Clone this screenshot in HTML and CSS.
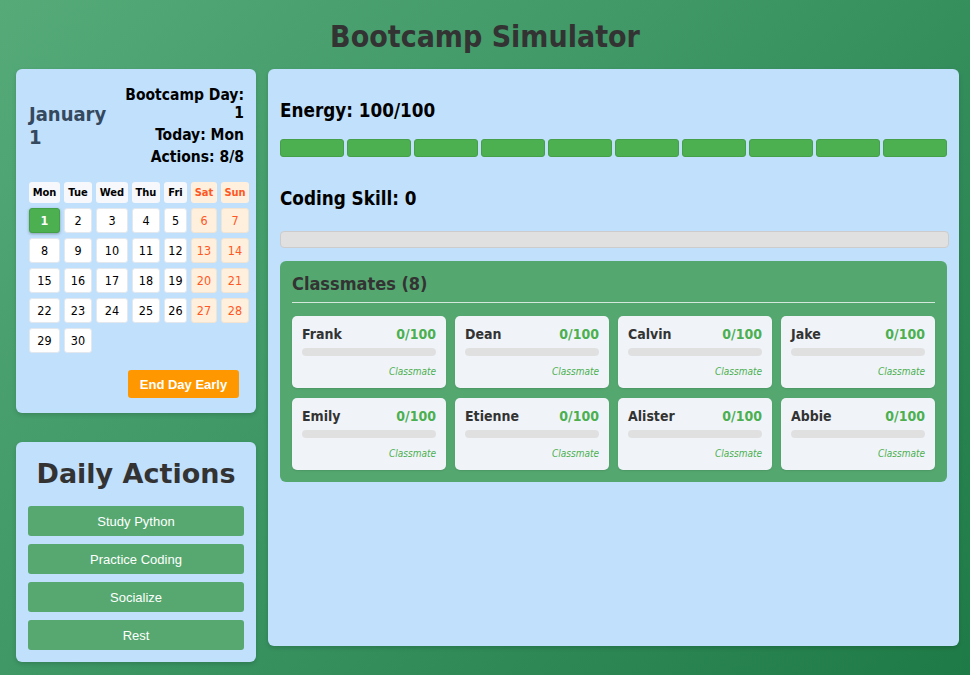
FILE: index.html
```html
<!DOCTYPE html>
<html lang="en">
<head>
<meta charset="utf-8">
<title>Bootcamp Simulator</title>
<link rel="stylesheet" href="styles.css">
</head>
<body>
<h1 class="title">Bootcamp Simulator</h1>
<div class="layout">
  <aside class="sidebar">
    <section class="panel calendar-panel">
      <div class="cal-header">
        <div class="cal-month">January 1</div>
        <div class="cal-info">
          <p>Bootcamp Day: 1</p>
          <p>Today: Mon</p>
          <p>Actions: 8/8</p>
        </div>
      </div>
      <div class="cal-grid">
        <div class="cal-head">Mon</div>
        <div class="cal-head">Tue</div>
        <div class="cal-head">Wed</div>
        <div class="cal-head">Thu</div>
        <div class="cal-head">Fri</div>
        <div class="cal-head weekend">Sat</div>
        <div class="cal-head weekend">Sun</div>
        <div class="cal-day today">1</div>
        <div class="cal-day">2</div>
        <div class="cal-day">3</div>
        <div class="cal-day">4</div>
        <div class="cal-day">5</div>
        <div class="cal-day weekend">6</div>
        <div class="cal-day weekend">7</div>
        <div class="cal-day">8</div>
        <div class="cal-day">9</div>
        <div class="cal-day">10</div>
        <div class="cal-day">11</div>
        <div class="cal-day">12</div>
        <div class="cal-day weekend">13</div>
        <div class="cal-day weekend">14</div>
        <div class="cal-day">15</div>
        <div class="cal-day">16</div>
        <div class="cal-day">17</div>
        <div class="cal-day">18</div>
        <div class="cal-day">19</div>
        <div class="cal-day weekend">20</div>
        <div class="cal-day weekend">21</div>
        <div class="cal-day">22</div>
        <div class="cal-day">23</div>
        <div class="cal-day">24</div>
        <div class="cal-day">25</div>
        <div class="cal-day">26</div>
        <div class="cal-day weekend">27</div>
        <div class="cal-day weekend">28</div>
        <div class="cal-day">29</div>
        <div class="cal-day">30</div>
      </div>
      <button class="end-day">End Day Early</button>
    </section>
    <section class="panel actions-panel">
      <h2 class="actions-title">Daily Actions</h2>
      <button class="action-btn">Study Python</button>
      <button class="action-btn">Practice Coding</button>
      <button class="action-btn">Socialize</button>
      <button class="action-btn">Rest</button>
    </section>
  </aside>
  <main class="panel main-panel">
    <h3 class="stat-title energy-title">Energy: 100/100</h3>
    <div class="energy-bar">
      <div class="seg"></div><div class="seg"></div><div class="seg"></div><div class="seg"></div><div class="seg"></div>
      <div class="seg"></div><div class="seg"></div><div class="seg"></div><div class="seg"></div><div class="seg"></div>
    </div>
    <h3 class="stat-title skill-title">Coding Skill: 0</h3>
    <div class="skill-bar"></div>
    <section class="classmates">
      <h3 class="classmates-title">Classmates (8)</h3>
      <div class="cards">
        <div class="card"><div class="card-top"><span class="name">Frank</span><span class="score">0/100</span></div><div class="card-bar"></div><div class="role">Classmate</div></div>
        <div class="card"><div class="card-top"><span class="name">Dean</span><span class="score">0/100</span></div><div class="card-bar"></div><div class="role">Classmate</div></div>
        <div class="card"><div class="card-top"><span class="name">Calvin</span><span class="score">0/100</span></div><div class="card-bar"></div><div class="role">Classmate</div></div>
        <div class="card"><div class="card-top"><span class="name">Jake</span><span class="score">0/100</span></div><div class="card-bar"></div><div class="role">Classmate</div></div>
        <div class="card"><div class="card-top"><span class="name">Emily</span><span class="score">0/100</span></div><div class="card-bar"></div><div class="role">Classmate</div></div>
        <div class="card"><div class="card-top"><span class="name">Etienne</span><span class="score">0/100</span></div><div class="card-bar"></div><div class="role">Classmate</div></div>
        <div class="card"><div class="card-top"><span class="name">Alister</span><span class="score">0/100</span></div><div class="card-bar"></div><div class="role">Classmate</div></div>
        <div class="card"><div class="card-top"><span class="name">Abbie</span><span class="score">0/100</span></div><div class="card-bar"></div><div class="role">Classmate</div></div>
      </div>
    </section>
  </main>
</div>
</body>
</html>
```

FILE: styles.css
```css
* { box-sizing: border-box; }

html, body { height: 100%; }

body {
  margin: 0;
  font-family: "DejaVu Sans Condensed", "DejaVu Sans", sans-serif;
  font-stretch: condensed;
  color: #000;
  background: linear-gradient(135deg, #55aa78 0%, #3a9462 50%, #1e7a46 100%);
  overflow: hidden;
}

.title {
  margin: 0;
  padding-top: 18px;
  height: 69px;
  font-size: 30px;
  line-height: 37px;
  text-align: center;
  color: #333;
  font-weight: bold;
}

.layout {
  display: grid;
  grid-template-columns: 240px 691px;
  gap: 12px;
  padding-left: 16px;
  align-items: start;
}

.sidebar {
  display: flex;
  flex-direction: column;
  gap: 29px;
}

.panel {
  background: #c1e0fc;
  border-radius: 6px;
  padding: 12px;
  box-shadow: 0 2px 4px rgba(0, 0, 0, 0.15);
}

/* Calendar */
.calendar-panel {
  display: flex;
  flex-direction: column;
  padding-bottom: 15px;
}

.cal-header {
  display: flex;
  justify-content: space-between;
  align-items: center;
  padding-top: 5px;
  margin-bottom: 16px;
}

.cal-month {
  max-width: 85px;
  padding-left: 1px;
  font-size: 20px;
  line-height: 23px;
  font-weight: bold;
  color: #34495e;
}

.cal-info {
  max-width: 124px;
  text-align: right;
  font-size: 15.5px;
  line-height: 18px;
  font-weight: bold;
  display: flex;
  flex-direction: column;
  gap: 4px;
}

.cal-info p { margin: 0; }

.cal-grid {
  display: grid;
  grid-template-columns: 31px 28px 32px 28px 23px 26px 28px;
  grid-auto-rows: 25px;
  grid-template-rows: 21px;
  gap: 5px 4px;
  margin-left: 1px;
}

.cal-head,
.cal-day {
  display: flex;
  align-items: center;
  justify-content: center;
  border-radius: 3px;
}

.cal-head {
  background: #f6f8fb;
  font-size: 11px;
  font-weight: bold;
  color: #000;
}

.cal-day {
  background: #fff;
  border: 1px solid #e3e8ee;
  font-size: 12.5px;
  color: #000;
}

.cal-head.weekend {
  background: #fff0de;
  color: #ff5722;
}

.cal-day.weekend {
  background: #fff0de;
  border-color: #f3e4d2;
  color: #ff5722;
}

.cal-day.today {
  background: #4caf50;
  border-color: #43a047;
  color: #fff;
  font-weight: bold;
  box-shadow: 0 1px 3px rgba(0, 0, 0, 0.3);
}

.end-day {
  align-self: flex-end;
  margin: 17px 5px 0 0;
  width: 111px;
  height: 28px;
  border: none;
  border-radius: 3px;
  background: #ff9800;
  color: #fff;
  font-family: "Liberation Sans", Arial, sans-serif;
  font-size: 13px;
  font-weight: bold;
  padding: 0;
}

/* Daily actions */
.actions-panel {
  display: flex;
  flex-direction: column;
  gap: 8px;
}

.actions-title {
  margin: 3px 0 7px;
  font-family: "DejaVu Sans", sans-serif;
  font-stretch: normal;
  font-size: 27px;
  line-height: 34px;
  text-align: center;
  color: #333;
  font-weight: bold;
}

.action-btn {
  height: 30px;
  border: none;
  border-radius: 3px;
  background: #56a870;
  color: #fff;
  font-family: "Liberation Sans", Arial, sans-serif;
  font-size: 13px;
  padding: 0;
}

/* Main panel */
.main-panel {
  height: 577px;
}

.stat-title {
  margin: 0;
  font-size: 18.72px;
  line-height: 22px;
  font-weight: bold;
  color: #000;
}

.energy-title { margin-top: 19px; }

.energy-bar {
  display: flex;
  gap: 3px;
  margin-top: 17px;
  height: 18px;
}

.seg {
  flex: 1;
  background: #4caf50;
  border: 1px solid #45a049;
  border-radius: 3px;
}

.skill-title { margin-top: 31px; }

.skill-bar {
  margin-top: 21px;
  height: 17px;
  background: #e0e0e0;
  border: 1px solid #cccccc;
  border-radius: 4px;
  margin-right: -2px;
}

.classmates {
  margin-top: 13px;
  background: #55a770;
  border-radius: 6px;
  padding: 12px;
}

.classmates-title {
  margin: 0 0 13px;
  padding-bottom: 7px;
  border-bottom: 1px solid rgba(255, 255, 255, 0.75);
  font-size: 18px;
  line-height: 22px;
  font-weight: bold;
  color: #333;
}

.cards {
  display: grid;
  grid-template-columns: repeat(4, 1fr);
  gap: 10px 9px;
}

.card {
  background: #f0f4f8;
  border-radius: 5px;
  padding: 10px;
  height: 72px;
  box-shadow: 0 1px 2px rgba(0, 0, 0, 0.1);
}

.card-top {
  display: flex;
  justify-content: space-between;
  font-size: 14px;
  line-height: 16px;
  font-weight: bold;
}

.name { color: #333; }
.score { color: #4caf50; }

.card-bar {
  margin-top: 6px;
  height: 8px;
  background: #e0e0e0;
  border-radius: 4px;
}

.role {
  margin-top: 10px;
  text-align: right;
  font-size: 10px;
  line-height: 12px;
  font-style: italic;
  color: #4caf50;
}
```
